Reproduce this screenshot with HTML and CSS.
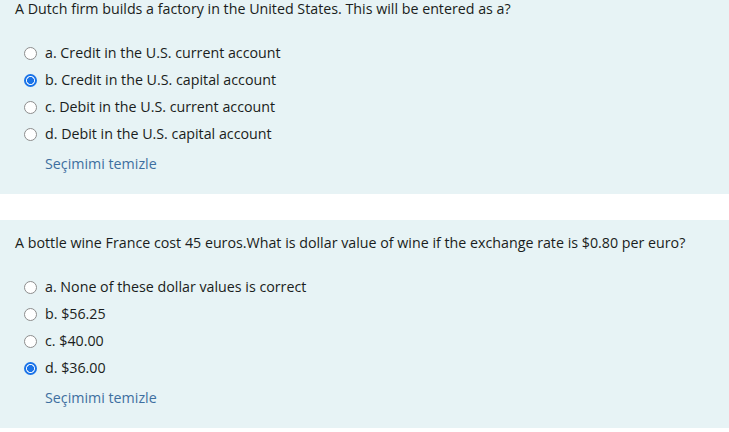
FILE: index.html
```html
<!DOCTYPE html>
<html lang="tr">
<head>
<meta charset="utf-8">
<title>Quiz</title>
<link rel="stylesheet" href="styles.css">
</head>
<body>
<div class="que first">
  <div class="qtext">A Dutch firm builds a factory in the United States. This will be entered as a?</div>
  <div class="answers">
    <label class="opt"><input type="radio" name="q1"><span>a. Credit in the U.S. current account</span></label>
    <label class="opt"><input type="radio" name="q1" checked><span>b. Credit in the U.S. capital account</span></label>
    <label class="opt"><input type="radio" name="q1"><span>c. Debit in the U.S. current account</span></label>
    <label class="opt"><input type="radio" name="q1"><span>d. Debit in the U.S. capital account</span></label>
  </div>
  <a class="clear" href="#">Seçimimi temizle</a>
</div>
<div class="que">
  <div class="qtext">A bottle wine France cost 45 euros.What is dollar value of wine if the exchange rate is $0.80 per euro?</div>
  <div class="answers">
    <label class="opt"><input type="radio" name="q2"><span>a. None of these dollar values is correct</span></label>
    <label class="opt"><input type="radio" name="q2"><span>b. $56.25</span></label>
    <label class="opt"><input type="radio" name="q2"><span>c. $40.00</span></label>
    <label class="opt"><input type="radio" name="q2" checked><span>d. $36.00</span></label>
  </div>
  <a class="clear" href="#">Seçimimi temizle</a>
</div>
</body>
</html>
```
FILE: styles.css
```css
html, body {
  margin: 0;
  padding: 0;
  background: #ffffff;
}
body {
  font-family: "Open Sans", "Noto Sans", sans-serif;
  font-size: 14.25px;
  line-height: 22.5px;
  color: #1a1d20;
  overflow: hidden;
}
.que {
  background: #e7f3f5;
  padding: 12px 15px 18px 15px;
  display: flex;
  flex-direction: column;
}
.que.first {
  margin-top: -14px;
  margin-bottom: 26.5px;
}
.qtext {
  margin-bottom: 19.5px;
}
.answers {
  display: flex;
  flex-direction: column;
  padding-left: 9px;
}
.opt {
  display: flex;
  align-items: center;
  height: 27px;
  gap: 8px;
}
.opt input {
  appearance: none;
  -webkit-appearance: none;
  margin: 0;
  width: 13px;
  height: 13px;
  border-radius: 50%;
  border: 1px solid #8d8d8d;
  background: #ffffff;
  box-sizing: border-box;
  flex: none;
}
.opt input:checked {
  border: 2px solid #1a73e8;
  background: radial-gradient(circle, #1a73e8 0 3.2px, #ffffff 3.8px);
}
.clear {
  margin-top: 5px;
  margin-left: 30px;
  align-self: flex-start;
  color: #3e6fa0;
  text-decoration: none;
}
```
